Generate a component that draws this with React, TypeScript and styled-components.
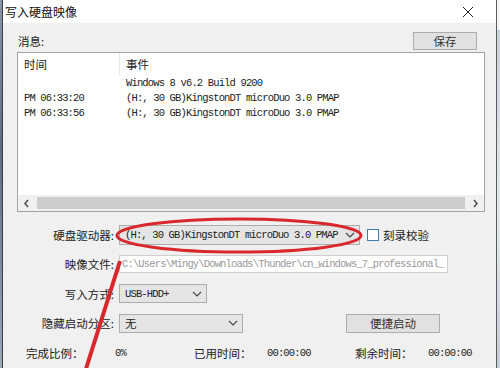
import React from 'react';
import styled, { createGlobalStyle } from 'styled-components';

const GlobalStyle = createGlobalStyle`
  html, body {
    margin: 0;
    padding: 0;
    background: #f0f0f0;
    font-family: "Noto Sans CJK SC", "Noto Sans", sans-serif;
  }
`;

const MONO = `"Liberation Mono", "Noto Sans CJK SC", monospace`;
const CJK = `"Noto Sans CJK SC", "Noto Sans", sans-serif`;

const Screen = styled.div`
  position: relative;
  width: 500px;
  height: 368px;
  display: flex;
  overflow: hidden;
  background: #dde3ea;
`;
const LeftStrip = styled.div`
  width: 2px;
  background: linear-gradient(#8a96a6, #5d6d82 40%, #9aa8b8);
`;
const RightStrip = styled.div`
  flex: 1;
  background: linear-gradient(#f4f4f4 0 30px, #c9d3de 30px, #e4e8ee 60%, #c2ccd8);
`;
const Window = styled.div`
  width: 493px;
  display: flex;
  flex-direction: column;
  border-left: 1px solid #3f3f3f;
  border-right: 1px solid #5a5a5a;
  background: #f0f0f0;
`;
const TitleBar = styled.div`
  height: 24px;
  background: #fff;
  display: flex;
  align-items: center;
  padding-left: 2px;
  padding-right: 22px;
`;
const Title = styled.div`
  flex: 1;
  font-family: ${CJK};
  font-size: 12px;
  color: #111;
`;
const Close = styled.div`
  width: 12px;
  height: 12px;
  display: flex;
`;
const Body = styled.div`
  flex: 1;
  padding: 0 11px 0 14px;
  display: flex;
  flex-direction: column;
`;
const MsgHeader = styled.div`
  height: 29px;
  display: flex;
  align-items: center;
  justify-content: space-between;
  padding: 7px 8px 0 1px;
  box-sizing: border-box;
`;
const Label = styled.span<{ $size?: number }>`
  font-family: ${CJK};
  font-size: ${p => p.$size ?? 11.5}px;
  color: #222;
  white-space: nowrap;
`;
const Button = styled.div<{ $w: number; $h?: number; $ml?: number }>`
  width: ${p => p.$w}px;
  height: ${p => p.$h ?? 18}px;
  margin-left: ${p => p.$ml ?? 0}px;
  box-sizing: border-box;
  background: #e1e1e1;
  border: 1px solid #adadad;
  display: flex;
  align-items: center;
  justify-content: center;
  font-family: ${CJK};
  font-size: 11.5px;
  color: #333;
`;
const LogBox = styled.div`
  height: 160px;
  box-sizing: border-box;
  border: 1px solid #a3a3a3;
  background: #fff;
  display: flex;
  flex-direction: column;
`;
const LogRow = styled.div<{ $head?: boolean }>`
  display: grid;
  grid-template-columns: 101px 1fr;
  height: ${p => (p.$head ? 22 : 15)}px;
  align-items: center;
`;
const Cell = styled.div<{ $sep?: boolean; $head?: boolean }>`
  height: 100%;
  display: flex;
  align-items: center;
  padding-left: 6px;
  border-left: ${p => (p.$sep && p.$head ? '1px solid #e5e5e5' : p.$sep ? '1px solid transparent' : 'none')};
  font-family: ${p => (p.$head ? CJK : MONO)};
  font-size: ${p => (p.$head ? 11.5 : 10.5)}px;
  letter-spacing: ${p => (p.$head ? 0 : -0.85)}px;
  color: #222;
  white-space: nowrap;
`;
const Spacer = styled.div`
  flex: 1;
`;
const HScroll = styled.div`
  height: 16px;
  display: flex;
  align-items: center;
  background: #f0f0f0;
`;
const ScrollArrow = styled.div`
  width: 17px;
  height: 16px;
  display: flex;
  align-items: center;
  justify-content: center;
`;
const Thumb = styled.div`
  flex: 1;
  height: 12px;
  margin: 0 2px;
  background: #cdcdcd;
`;
const Form = styled.div`
  margin-top: 8px;
  display: grid;
  grid-template-columns: 97px 1fr;
  column-gap: 5px;
  grid-auto-rows: 29.5px;
  align-items: center;
`;
const FormLabel = styled(Label)`
  text-align: right;
`;
const Control = styled.div`
  display: flex;
  align-items: center;
`;
const Select = styled.div<{ $w: number; $h?: number }>`
  width: ${p => p.$w}px;
  height: ${p => p.$h ?? 19}px;
  box-sizing: border-box;
  background: #e5e5e5;
  border: 1px solid #adadad;
  display: flex;
  align-items: center;
  justify-content: space-between;
  padding: 0 4px 0 5px;
  font-family: ${MONO};
  font-size: 10.5px;
  letter-spacing: -0.85px;
  color: #222;
  white-space: nowrap;
`;
const SelectCjk = styled.span`
  font-family: ${CJK};
  font-size: 11.5px;
  letter-spacing: 0;
`;
const Input = styled.div<{ $w: number }>`
  width: ${p => p.$w}px;
  height: 18px;
  box-sizing: border-box;
  background: #fff;
  border: 1px solid #cfcfcf;
  padding-left: 2px;
  display: flex;
  align-items: center;
  overflow: hidden;
  font-family: ${MONO};
  font-size: 10.5px;
  letter-spacing: -0.85px;
  color: #9a9a9a;
  white-space: nowrap;
`;
const Check = styled.div`
  width: 12px;
  height: 12px;
  box-sizing: border-box;
  border: 1px solid #3c7fb1;
  background: #fff;
  margin: 0 4px 0 7px;
`;
const Status = styled.div`
  height: 30px;
  display: grid;
  grid-template-columns: 89px 79px 73px 88px 73px 1fr;
  align-items: center;
  padding-left: 9px;
`;
const Mono = styled.span`
  font-family: ${MONO};
  font-size: 10.5px;
  letter-spacing: -0.85px;
  color: #222;
`;
const Overlay = styled.svg`
  position: absolute;
  left: 0;
  top: 0;
  pointer-events: none;
`;

const Chevron = ({ dir }: { dir: 'down' | 'left' | 'right' }) => {
  const pts =
    dir === 'down' ? '1,2 5,6 9,2' : dir === 'left' ? '5,1 2,4.5 5,8' : '2,1 5,4.5 2,8';
  const size = dir === 'down' ? { w: 10, h: 8 } : { w: 7, h: 9 };
  return (
    <svg width={size.w} height={size.h} viewBox={`0 0 ${size.w} ${size.h}`}>
      <polyline points={pts} fill="none" stroke={dir === 'down' ? '#444' : '#555'} strokeWidth={dir === 'down' ? 1.1 : 1.6} />
    </svg>
  );
};

const logs = [
  { time: '', event: 'Windows 8 v6.2 Build 9200' },
  { time: 'PM 06:33:20', event: '(H:, 30 GB)KingstonDT microDuo 3.0 PMAP' },
  { time: 'PM 06:33:56', event: '(H:, 30 GB)KingstonDT microDuo 3.0 PMAP' },
];

export default function App() {
  return (
    <Screen>
      <GlobalStyle />
      <LeftStrip />
      <Window>
        <TitleBar>
          <Title>写入硬盘映像</Title>
          <Close>
            <svg width="12" height="12" viewBox="0 0 12 12">
              <path d="M1 1 L11 11 M11 1 L1 11" stroke="#222" strokeWidth="1" />
            </svg>
          </Close>
        </TitleBar>
        <Body>
          <MsgHeader>
            <Label>消息:</Label>
            <Button $w={64}>保存</Button>
          </MsgHeader>
          <LogBox>
            <LogRow $head>
              <Cell $head>时间</Cell>
              <Cell $head $sep>事件</Cell>
            </LogRow>
            {logs.map((l, i) => (
              <LogRow key={i}>
                <Cell>{l.time}</Cell>
                <Cell $sep>{l.event}</Cell>
              </LogRow>
            ))}
            <Spacer />
            <HScroll>
              <ScrollArrow><Chevron dir="left" /></ScrollArrow>
              <Thumb />
              <ScrollArrow><Chevron dir="right" /></ScrollArrow>
            </HScroll>
          </LogBox>
          <Form>
            <FormLabel>硬盘驱动器:</FormLabel>
            <Control>
              <Select $w={241} $h={20}>
                <span>(H:, 30 GB)KingstonDT microDuo 3.0 PMAP</span>
                <Chevron dir="down" />
              </Select>
              <Check />
              <Label>刻录校验</Label>
            </Control>
            <FormLabel>映像文件:</FormLabel>
            <Control>
              <Input $w={329}>C:\Users\Mingy\Downloads\Thunder\cn_windows_7_professional_</Input>
            </Control>
            <FormLabel>写入方式:</FormLabel>
            <Control>
              <Select $w={88}>
                <span>USB-HDD+</span>
                <Chevron dir="down" />
              </Select>
            </Control>
            <FormLabel>隐藏启动分区:</FormLabel>
            <Control>
              <Select $w={124}>
                <SelectCjk>无</SelectCjk>
                <Chevron dir="down" />
              </Select>
              <Button $w={94} $h={19} $ml={103}>便捷启动</Button>
            </Control>
          </Form>
          <Status>
            <Label>完成比例：</Label>
            <Mono>0%</Mono>
            <Label>已用时间：</Label>
            <Mono>00:00:00</Mono>
            <Label>剩余时间：</Label>
            <Mono>00:00:00</Mono>
          </Status>
        </Body>
      </Window>
      <RightStrip />
      <Overlay width="500" height="368" viewBox="0 0 500 368">
        <ellipse cx="239" cy="235.5" rx="122" ry="16.5" fill="none" stroke="#d8282c" strokeWidth="3" />
        <line x1="120" y1="261" x2="85" y2="372" stroke="#d8282c" strokeWidth="4" />
      </Overlay>
    </Screen>
  );
}
